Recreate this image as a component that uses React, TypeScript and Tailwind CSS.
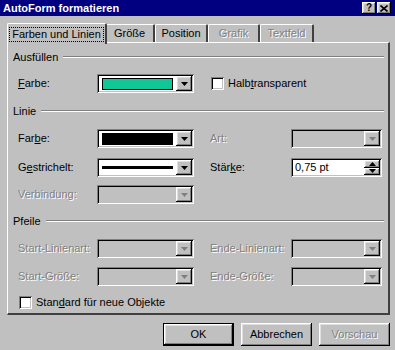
const raised =
  'shadow-[inset_-1px_-1px_0_#000000,inset_1px_1px_0_#ffffff,inset_-2px_-2px_0_#808080,inset_2px_2px_0_#dfdfdf]';
const sunken =
  'shadow-[inset_1px_1px_0_#808080,inset_-1px_-1px_0_#ffffff,inset_2px_2px_0_#000000,inset_-2px_-2px_0_#c0c0c0]';
const disabledText = 'text-[#808080] [text-shadow:1px_1px_0_#ffffff]';

function Arrow({ disabled }: { disabled?: boolean }) {
  return (
    <div className={`w-[16px] h-[15px] bg-[#c0c0c0] flex items-center justify-center ${raised}`}>
      <svg width="7" height="4" viewBox="0 0 7 4">
        <path d="M0 0h7L3.5 4z" fill={disabled ? '#808080' : '#000'} />
      </svg>
    </div>
  );
}

function Combo({ width, disabled, children }: any) {
  return (
    <div
      className={`h-[19px] flex items-center p-[2px] ${sunken} ${disabled ? 'bg-[#c0c0c0]' : 'bg-white'}`}
      style={{ width }}
    >
      <div className="flex-1 h-full flex items-center px-[3px]">{children}</div>
      <Arrow disabled={disabled} />
    </div>
  );
}

function Label({ children, disabled, w }: any) {
  return (
    <div className={`shrink-0 ${disabled ? disabledText : 'text-black'}`} style={{ width: w }}>
      {children}
    </div>
  );
}

function Header({ title }: { title: string }) {
  return (
    <div className="flex items-center h-[14px] pl-[5px] pr-[4px]">
      <span>{title}</span>
      <div className="flex-1 ml-[5px] h-[2px] border-t border-[#808080] border-b border-b-white" />
    </div>
  );
}

function Check({ children }: any) {
  return (
    <div className="flex items-center gap-[4px]">
      <div className={`w-[13px] h-[13px] bg-white ${sunken}`} />
      <span>{children}</span>
    </div>
  );
}

function Tab({ label, active, disabled, w }: any) {
  return (
    <div
      className={`relative flex items-center justify-center bg-[#c0c0c0] border-t border-l border-white border-r-2 border-r-[#404040] rounded-t-[2px] ${
        active ? 'h-[21px] z-10 -mb-[2px] -mr-[2px]' : 'h-[18px] mb-0'
      }`}
      style={{ width: w }}
    >
      <span
        className={`${disabled ? disabledText : ''} ${
          active ? 'outline outline-1 outline-dotted outline-black px-[2px] leading-[13px]' : ''
        }`}
      >
        {label}
      </span>
    </div>
  );
}

function Button({ children, isDefault, disabled }: any) {
  return (
    <div
      className={`w-[71px] h-[23px] flex items-center justify-center bg-[#c0c0c0] ${
        isDefault ? 'border border-black' : ''
      }`}
    >
      <div className={`w-full h-full flex items-center justify-center ${raised}`}>
        <span className={disabled ? disabledText : ''}>{children}</span>
      </div>
    </div>
  );
}

export default function App() {
  return (
    <div
      className="w-[395px] h-[350px] bg-[#c0c0c0] text-[11px] text-black overflow-hidden"
      style={{ fontFamily: '"Liberation Sans", Arial, sans-serif' }}
    >
      {/* Titelleiste */}
      <div className="h-[16px] bg-[#000080] flex items-center pl-[3px] pr-[4px]">
        <span className="text-white font-bold text-[11px] flex-1">AutoForm formatieren</span>
        <div className={`w-[14px] h-[12px] bg-[#c0c0c0] flex items-center justify-center font-bold text-[10px] leading-none ${raised}`}>
          ?
        </div>
        <div className={`ml-[1px] w-[14px] h-[12px] bg-[#c0c0c0] flex items-center justify-center ${raised}`}>
          <svg width="8" height="7" viewBox="0 0 8 7">
            <path d="M0.5 0.5l7 6M7.5 0.5l-7 6" stroke="#000" strokeWidth="1.6" />
          </svg>
        </div>
      </div>

      {/* Reiter */}
      <div className="flex items-end h-[26px] pl-[7px]">
        <Tab label="Farben und Linien" active w={100} />
        <Tab label="Größe" w={50} />
        <Tab label="Position" w={53} />
        <Tab label="Grafik" w={52} disabled />
        <Tab label="Textfeld" w={54} disabled />
      </div>

      {/* Inhalt */}
      <div className="ml-[7px] w-[383px] h-[273px] border-t border-l border-white border-r-2 border-b-2 border-r-[#404040] border-b-[#404040] pt-[7px] flex flex-col">
        <Header title="Ausfüllen" />
        <div className="flex items-center mt-[10px] pl-[10px]">
          <Label w={79}>
            <u>F</u>arbe:
          </Label>
          <Combo width={97}>
            <div className="w-full h-[12px] bg-[#10c896] border border-black" />
          </Combo>
          <div className="ml-[17px]">
            <Check>
              Halb<u>t</u>ransparent
            </Check>
          </div>
        </div>

        <div className="mt-[11px]">
          <Header title="Linie" />
        </div>
        <div className="flex items-center mt-[11px] pl-[10px]">
          <Label w={79}>
            Far<u>b</u>e:
          </Label>
          <Combo width={97}>
            <div className="w-full h-[12px] bg-black" />
          </Combo>
          <div className="w-[16px]" />
          <Label w={81} disabled>
            Art:
          </Label>
          <Combo width={91} disabled />
        </div>
        <div className="flex items-center mt-[10px] pl-[10px]">
          <Label w={79}>
            G<u>e</u>strichelt:
          </Label>
          <Combo width={97}>
            <div className="w-full h-[3px] bg-black" />
          </Combo>
          <div className="w-[16px]" />
          <Label w={81}>
            Stär<u>k</u>e:
          </Label>
          <div className={`w-[91px] h-[19px] bg-white flex p-[2px] ${sunken}`}>
            <div className="flex-1 flex items-center pl-[2px]">0,75 pt</div>
            <div className="w-[16px] flex flex-col">
              <div className={`flex-1 bg-[#c0c0c0] flex items-center justify-center ${raised}`}>
                <svg width="7" height="4" viewBox="0 0 7 4">
                  <path d="M0 4h7L3.5 0z" fill="#000" />
                </svg>
              </div>
              <div className={`flex-1 bg-[#c0c0c0] flex items-center justify-center ${raised}`}>
                <svg width="7" height="4" viewBox="0 0 7 4">
                  <path d="M0 0h7L3.5 4z" fill="#000" />
                </svg>
              </div>
            </div>
          </div>
        </div>
        <div className="flex items-center mt-[8px] pl-[10px]">
          <Label w={79} disabled>
            Verbindung:
          </Label>
          <Combo width={97} disabled />
        </div>

        <div className="mt-[10px]">
          <Header title="Pfeile" />
        </div>
        <div className="flex items-center mt-[11px] pl-[10px]">
          <Label w={79} disabled>
            Start-Linienart:
          </Label>
          <Combo width={97} disabled />
          <div className="w-[16px]" />
          <Label w={81} disabled>
            Ende-Linienart:
          </Label>
          <Combo width={91} disabled />
        </div>
        <div className="flex items-center mt-[9px] pl-[10px]">
          <Label w={79} disabled>
            Start-Größe:
          </Label>
          <Combo width={97} disabled />
          <div className="w-[16px]" />
          <Label w={81} disabled>
            Ende-Größe:
          </Label>
          <Combo width={91} disabled />
        </div>
        <div className="mt-[8px] pl-[11px]">
          <Check>
            Stan<u>d</u>ard für neue Objekte
          </Check>
        </div>
      </div>

      {/* Schaltflächen */}
      <div className="flex justify-end gap-[7px] pr-[5px] mt-[8px]">
        <Button isDefault>OK</Button>
        <Button>Abbrechen</Button>
        <Button disabled>Vorschau</Button>
      </div>
    </div>
  );
}
